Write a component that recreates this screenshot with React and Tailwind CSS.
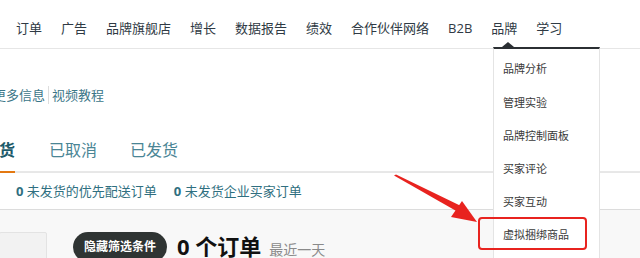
import React from "react";

const font = { fontFamily: '"Open Sans", "Noto Sans CJK SC", sans-serif' };

export default function App() {
  const nav = ["订单", "广告", "品牌旗舰店", "增长", "数据报告", "绩效", "合作伙伴网络", "B2B", "品牌", "学习"];
  const menu = ["品牌分析", "管理实验", "品牌控制面板", "买家评论", "买家互动", "虚拟捆绑商品"];
  return (
    <div className="relative w-[640px] h-[258px] overflow-hidden bg-white flex flex-col font-['Open_Sans','Noto_Sans_CJK_SC',sans-serif]" style={font}>
      <div className="h-[49px] shrink-0 border-b border-[#e6e6e6] flex items-center pt-[8px] pl-[16px] gap-[19px] text-[13px] text-[#2f3a44]">
        {nav.map((n) => (
          <span key={n} className="whitespace-nowrap leading-[20px]">{n}</span>
        ))}
      </div>

      <div className="mt-[36px] flex items-center text-[13px] leading-[20px] text-[#3b7688] ml-[-7px] whitespace-nowrap">
        <span>更多信息</span>
        <span className="mx-[3px] w-px h-[18px] bg-[#dddddd]"></span>
        <span>视频教程</span>
      </div>

      <div className="mt-[33px] flex items-end border-b-2 border-[#e8e8e8] text-[16px] leading-[24px] whitespace-nowrap">
        <span className="ml-[-33px] -mb-[2px] pb-[9px] border-b-2 border-[#e47911] font-bold text-[#1d5a6a]">未发货</span>
        <span className="ml-[34px] pb-[9px] text-[#4a8595]">已取消</span>
        <span className="ml-[33px] pb-[9px] text-[#4a8595]">已发货</span>
      </div>

      <div className="pt-[8px] pb-[8px] pl-[16px] flex items-center gap-[17px] text-[13px] leading-[20px] text-[#2f6f80] border-b border-[#dcdcdc] shadow-[0_1px_2px_rgba(0,0,0,0.06)] whitespace-nowrap">
        <span><b className="font-bold">0</b> 未发货的优先配送订单</span>
        <span><b className="font-bold">0</b> 未发货企业买家订单</span>
      </div>

      <div className="flex-1 bg-[#f8f8f8] pt-[22px] flex items-start">
        <div className="w-[48px] h-[40px] bg-[#f2f2f2] border border-[#e3e3e3] ml-[-1px] rounded-[2px]"></div>
        <div className="ml-[26px] h-[30px] px-[11px] rounded-full bg-[#2f3433] text-white text-[12px] font-bold flex items-center whitespace-nowrap">隐藏筛选条件</div>
        <div className="ml-[10px] flex items-baseline whitespace-nowrap mt-[-2px]">
          <span className="text-[22px] leading-[32px] font-bold text-[#111]">0 个订单</span>
          <span className="ml-[8px] text-[14px] text-[#8a8a8a]">最近一天</span>
        </div>
      </div>

      {/* Dropdown menu */}
      <div className="absolute left-[493px] top-[47px] w-[107px] bottom-[-2px] bg-white border-x border-b border-[#e4e4e4] border-t-2 border-t-[#2b2f33] pt-[4px]">
        <div className="absolute left-[8px] top-[-7px] w-0 h-0 border-x-[6px] border-x-transparent border-b-[5px] border-b-[#2b2f33]"></div>
        {menu.map((m) => (
          <div key={m} className="h-[33.2px] flex items-center pl-[9px] text-[11px] text-[#3a3a3a] whitespace-nowrap">{m}</div>
        ))}
      </div>

      {/* Annotation box */}
      <div className="absolute left-[478px] top-[217px] w-[109px] h-[33px] border-2 border-[#e8231f] rounded-[4px]"></div>

      {/* Annotation arrow */}
      <svg className="absolute left-0 top-0 pointer-events-none" width="640" height="258" viewBox="0 0 640 258">
        <polygon points="394,175.5 396,174.5 461,206 458,212" fill="#e8231f" />
        <polygon points="477,222 462,201 451,217" fill="#e8231f" />
      </svg>
    </div>
  );
}
